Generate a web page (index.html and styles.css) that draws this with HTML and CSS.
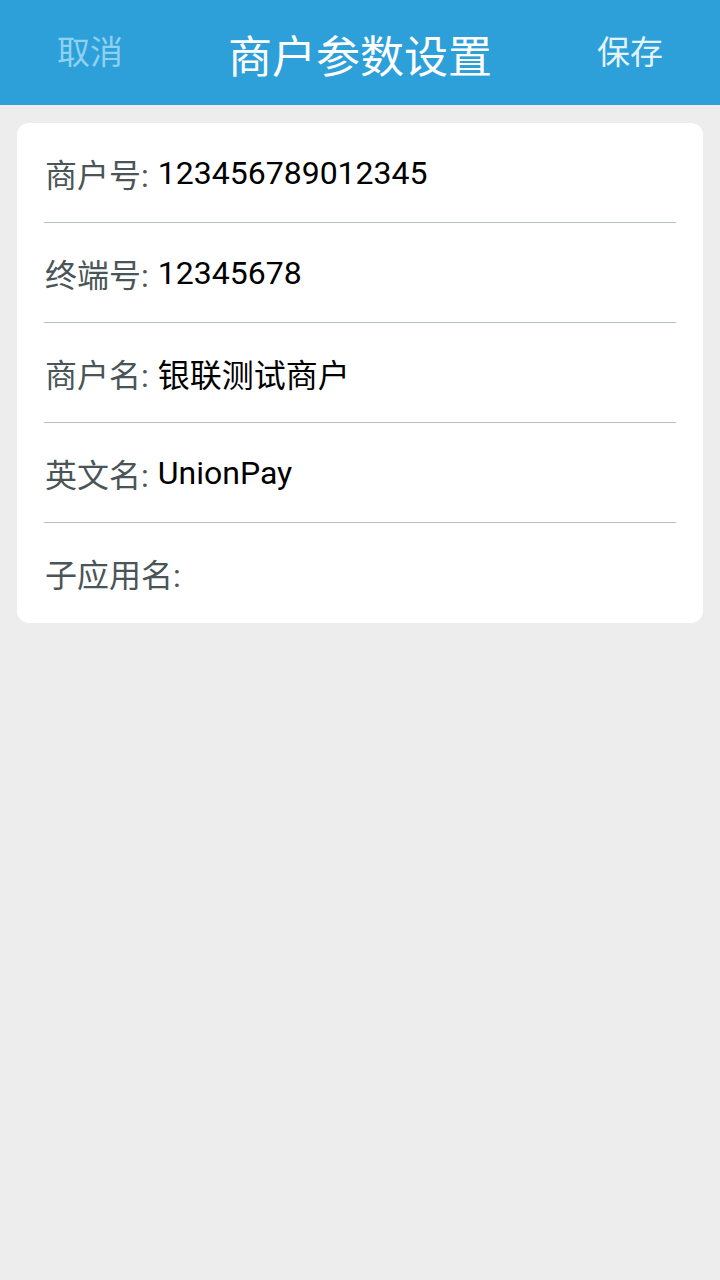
FILE: index.html
```html
<!DOCTYPE html>
<html lang="zh-CN">
<head>
<meta charset="utf-8">
<link rel="stylesheet" href="styles.css">
</head>
<body>
<header class="topbar">
  <span class="btn cancel">取消</span>
  <span class="title">商户参数设置</span>
  <span class="btn save">保存</span>
</header>
<main class="card">
  <div class="row"><span class="label">商户号<span class="colon">:</span></span><span class="value">123456789012345</span></div>
  <div class="row"><span class="label">终端号<span class="colon">:</span></span><span class="value">12345678</span></div>
  <div class="row"><span class="label">商户名<span class="colon">:</span></span><span class="value">银联测试商户</span></div>
  <div class="row"><span class="label">英文名<span class="colon">:</span></span><span class="value">UnionPay</span></div>
  <div class="row"><span class="label">子应用名<span class="colon">:</span></span><span class="value"></span></div>
</main>
</body>
</html>
```
FILE: styles.css
```css
html, body {
  margin: 0;
  padding: 0;
}
body {
  width: 720px;
  height: 1280px;
  background: #ededed;
  font-family: Roboto, "Noto Sans CJK SC", sans-serif;
}
.topbar {
  height: 105px;
  background: #2d9fd9;
  display: flex;
  align-items: center;
  justify-content: space-between;
  padding: 0 57px;
  box-sizing: border-box;
}
.btn {
  font-family: "Noto Sans CJK SC", sans-serif;
  font-size: 33px;
  line-height: 1;
  margin-top: -4px;
}
.cancel { color: #8dd0f0; }
.save { color: #e3f3fb; }
.title {
  font-family: "Noto Sans CJK SC", sans-serif;
  font-size: 44px;
  color: #ffffff;
  line-height: 1;
  margin-top: 2px;
}
.card {
  margin: 18px 17px 0;
  background: #ffffff;
  border-radius: 12px;
  padding: 0 27px;
}
.row {
  height: 99px;
  display: flex;
  align-items: center;
  gap: 9px;
  border-bottom: 1px solid #b8bfc1;
  font-size: 32px;
  padding-left: 1px;
}
.row:last-child {
  border-bottom: none;
  height: 100px;
}
.label {
  font-family: "Noto Sans CJK SC", sans-serif;
  color: #4a5558;
}
.colon {
  font-family: Roboto, sans-serif;
}
.value {
  font-family: Roboto, "Noto Sans CJK SC", sans-serif;
  color: #000000;
}
```
